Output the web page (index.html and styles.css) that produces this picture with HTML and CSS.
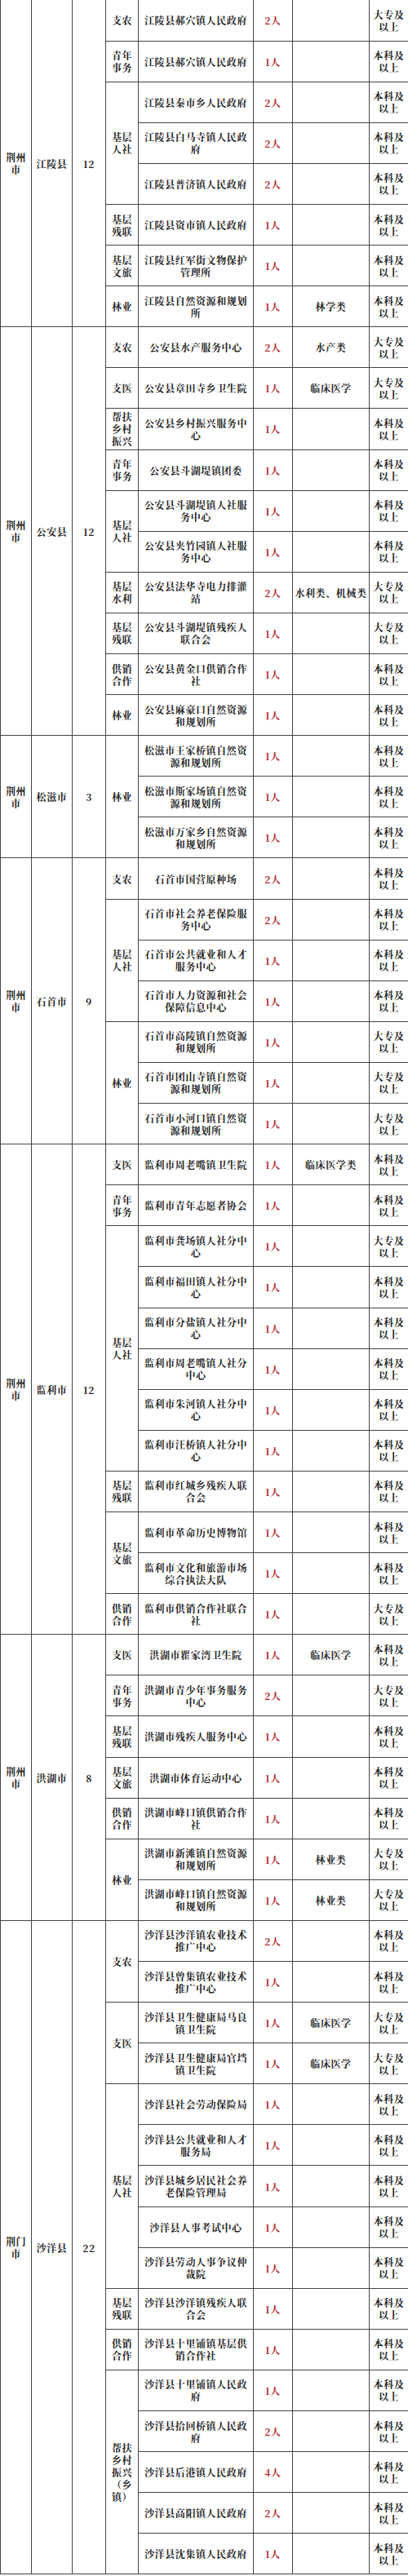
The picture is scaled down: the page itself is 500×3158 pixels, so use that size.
FILE: index.html
```html
<!DOCTYPE html>
<html lang="zh-CN">
<head>
<meta charset="utf-8">
<title>岗位表</title>
<link rel="stylesheet" href="styles.css">
</head>
<body>
<table class="sheet">
<colgroup>
<col class="c-city"><col class="c-county"><col class="c-total"><col class="c-cat"><col class="c-org"><col class="c-num"><col class="c-major"><col class="c-edu">
</colgroup>
<tbody>
<!-- 江陵县 -->
<tr><td rowspan="8">荆州市</td><td rowspan="8">江陵县</td><td rowspan="8">12</td><td>支农</td><td>江陵县郝穴镇人民政府</td><td class="num">2人</td><td></td><td>大专及以上</td></tr>
<tr><td>青年事务</td><td>江陵县郝穴镇人民政府</td><td class="num">1人</td><td></td><td>本科及以上</td></tr>
<tr><td rowspan="3">基层人社</td><td>江陵县秦市乡人民政府</td><td class="num">2人</td><td></td><td>本科及以上</td></tr>
<tr><td>江陵县白马寺镇人民政府</td><td class="num">2人</td><td></td><td>本科及以上</td></tr>
<tr><td>江陵县普济镇人民政府</td><td class="num">2人</td><td></td><td>本科及以上</td></tr>
<tr><td>基层残联</td><td>江陵县资市镇人民政府</td><td class="num">1人</td><td></td><td>本科及以上</td></tr>
<tr><td>基层文旅</td><td>江陵县红军街文物保护管理所</td><td class="num">1人</td><td></td><td>本科及以上</td></tr>
<tr><td>林业</td><td>江陵县自然资源和规划所</td><td class="num">1人</td><td>林学类</td><td>本科及以上</td></tr>
<!-- 公安县 -->
<tr><td rowspan="10">荆州市</td><td rowspan="10">公安县</td><td rowspan="10">12</td><td>支农</td><td>公安县水产服务中心</td><td class="num">2人</td><td>水产类</td><td>大专及以上</td></tr>
<tr><td>支医</td><td>公安县章田寺乡卫生院</td><td class="num">1人</td><td>临床医学</td><td>大专及以上</td></tr>
<tr><td>帮扶乡村振兴</td><td>公安县乡村振兴服务中心</td><td class="num">1人</td><td></td><td>本科及以上</td></tr>
<tr><td>青年事务</td><td>公安县斗湖堤镇团委</td><td class="num">1人</td><td></td><td>本科及以上</td></tr>
<tr><td rowspan="2">基层人社</td><td>公安县斗湖堤镇人社服务中心</td><td class="num">1人</td><td></td><td>本科及以上</td></tr>
<tr><td>公安县夹竹园镇人社服务中心</td><td class="num">1人</td><td></td><td>本科及以上</td></tr>
<tr><td>基层水利</td><td>公安县法华寺电力排灌站</td><td class="num">2人</td><td>水利类、机械类</td><td>大专及以上</td></tr>
<tr><td>基层残联</td><td>公安县斗湖堤镇残疾人联合会</td><td class="num">1人</td><td></td><td>大专及以上</td></tr>
<tr><td>供销合作</td><td>公安县黄金口供销合作社</td><td class="num">1人</td><td></td><td>本科及以上</td></tr>
<tr><td>林业</td><td>公安县麻豪口自然资源和规划所</td><td class="num">1人</td><td></td><td>本科及以上</td></tr>
<!-- 松滋市 -->
<tr><td rowspan="3">荆州市</td><td rowspan="3">松滋市</td><td rowspan="3">3</td><td rowspan="3">林业</td><td>松滋市王家桥镇自然资源和规划所</td><td class="num">1人</td><td></td><td>本科及以上</td></tr>
<tr><td>松滋市斯家场镇自然资源和规划所</td><td class="num">1人</td><td></td><td>本科及以上</td></tr>
<tr><td>松滋市万家乡自然资源和规划所</td><td class="num">1人</td><td></td><td>本科及以上</td></tr>
<!-- 石首市 -->
<tr><td rowspan="7">荆州市</td><td rowspan="7">石首市</td><td rowspan="7">9</td><td>支农</td><td>石首市国营原种场</td><td class="num">2人</td><td></td><td>本科及以上</td></tr>
<tr><td rowspan="3">基层人社</td><td>石首市社会养老保险服务中心</td><td class="num">2人</td><td></td><td>本科及以上</td></tr>
<tr><td>石首市公共就业和人才服务中心</td><td class="num">1人</td><td></td><td>本科及以上</td></tr>
<tr><td>石首市人力资源和社会保障信息中心</td><td class="num">1人</td><td></td><td>本科及以上</td></tr>
<tr><td rowspan="3">林业</td><td>石首市高陵镇自然资源和规划所</td><td class="num">1人</td><td></td><td>大专及以上</td></tr>
<tr><td>石首市团山寺镇自然资源和规划所</td><td class="num">1人</td><td></td><td>大专及以上</td></tr>
<tr><td>石首市小河口镇自然资源和规划所</td><td class="num">1人</td><td></td><td>大专及以上</td></tr>
<!-- 监利市 -->
<tr><td rowspan="12">荆州市</td><td rowspan="12">监利市</td><td rowspan="12">12</td><td>支医</td><td>监利市周老嘴镇卫生院</td><td class="num">1人</td><td>临床医学类</td><td>本科及以上</td></tr>
<tr><td>青年事务</td><td>监利市青年志愿者协会</td><td class="num">1人</td><td></td><td>本科及以上</td></tr>
<tr><td rowspan="6">基层人社</td><td>监利市龚场镇人社分中心</td><td class="num">1人</td><td></td><td>大专及以上</td></tr>
<tr><td>监利市福田镇人社分中心</td><td class="num">1人</td><td></td><td>本科及以上</td></tr>
<tr><td>监利市分盐镇人社分中心</td><td class="num">1人</td><td></td><td>本科及以上</td></tr>
<tr><td>监利市周老嘴镇人社分中心</td><td class="num">1人</td><td></td><td>本科及以上</td></tr>
<tr><td>监利市朱河镇人社分中心</td><td class="num">1人</td><td></td><td>本科及以上</td></tr>
<tr><td>监利市汪桥镇人社分中心</td><td class="num">1人</td><td></td><td>本科及以上</td></tr>
<tr><td>基层残联</td><td>监利市红城乡残疾人联合会</td><td class="num">1人</td><td></td><td>本科及以上</td></tr>
<tr><td rowspan="2">基层文旅</td><td>监利市革命历史博物馆</td><td class="num">1人</td><td></td><td>本科及以上</td></tr>
<tr><td>监利市文化和旅游市场综合执法大队</td><td class="num">1人</td><td></td><td>本科及以上</td></tr>
<tr><td>供销合作</td><td>监利市供销合作社联合社</td><td class="num">1人</td><td></td><td>大专及以上</td></tr>
<!-- 洪湖市 -->
<tr><td rowspan="7">荆州市</td><td rowspan="7">洪湖市</td><td rowspan="7">8</td><td>支医</td><td>洪湖市瞿家湾卫生院</td><td class="num">1人</td><td>临床医学</td><td>本科及以上</td></tr>
<tr><td>青年事务</td><td>洪湖市青少年事务服务中心</td><td class="num">2人</td><td></td><td>大专及以上</td></tr>
<tr><td>基层残联</td><td>洪湖市残疾人服务中心</td><td class="num">1人</td><td></td><td>本科及以上</td></tr>
<tr><td>基层文旅</td><td>洪湖市体育运动中心</td><td class="num">1人</td><td></td><td>本科及以上</td></tr>
<tr><td>供销合作</td><td>洪湖市峰口镇供销合作社</td><td class="num">1人</td><td></td><td>本科及以上</td></tr>
<tr><td rowspan="2">林业</td><td>洪湖市新滩镇自然资源和规划所</td><td class="num">1人</td><td>林业类</td><td>大专及以上</td></tr>
<tr><td>洪湖市峰口镇自然资源和规划所</td><td class="num">1人</td><td>林业类</td><td>大专及以上</td></tr>
<!-- 沙洋县 -->
<tr><td rowspan="16">荆门市</td><td rowspan="16">沙洋县</td><td rowspan="16">22</td><td rowspan="2">支农</td><td>沙洋县沙洋镇农业技术推广中心</td><td class="num">2人</td><td></td><td>本科及以上</td></tr>
<tr><td>沙洋县曾集镇农业技术推广中心</td><td class="num">1人</td><td></td><td>本科及以上</td></tr>
<tr><td rowspan="2">支医</td><td>沙洋县卫生健康局马良镇卫生院</td><td class="num">1人</td><td>临床医学</td><td>大专及以上</td></tr>
<tr><td>沙洋县卫生健康局官垱镇卫生院</td><td class="num">1人</td><td>临床医学</td><td>大专及以上</td></tr>
<tr><td rowspan="5">基层人社</td><td>沙洋县社会劳动保险局</td><td class="num">1人</td><td></td><td>本科及以上</td></tr>
<tr><td>沙洋县公共就业和人才服务局</td><td class="num">1人</td><td></td><td>本科及以上</td></tr>
<tr><td>沙洋县城乡居民社会养老保险管理局</td><td class="num">1人</td><td></td><td>本科及以上</td></tr>
<tr><td>沙洋县人事考试中心</td><td class="num">1人</td><td></td><td>本科及以上</td></tr>
<tr><td>沙洋县劳动人事争议仲裁院</td><td class="num">1人</td><td></td><td>本科及以上</td></tr>
<tr><td>基层残联</td><td>沙洋县沙洋镇残疾人联合会</td><td class="num">1人</td><td></td><td>本科及以上</td></tr>
<tr><td>供销合作</td><td>沙洋县十里铺镇基层供销合作社</td><td class="num">1人</td><td></td><td>本科及以上</td></tr>
<tr><td rowspan="5">帮扶乡村振兴（乡镇）</td><td>沙洋县十里铺镇人民政府</td><td class="num">1人</td><td></td><td>本科及以上</td></tr>
<tr><td>沙洋县拾回桥镇人民政府</td><td class="num">2人</td><td></td><td>本科及以上</td></tr>
<tr><td>沙洋县后港镇人民政府</td><td class="num">4人</td><td></td><td>本科及以上</td></tr>
<tr><td>沙洋县高阳镇人民政府</td><td class="num">2人</td><td></td><td>本科及以上</td></tr>
<tr><td>沙洋县沈集镇人民政府</td><td class="num">1人</td><td></td><td>本科及以上</td></tr>
</tbody>
</table>
</body>
</html>
```
FILE: styles.css
```css
html, body {
  margin: 0;
  padding: 0;
  background: #ffffff;
}

.sheet {
  width: 500px;
  table-layout: fixed;
  border-collapse: collapse;
  font-family: "Noto Serif CJK SC", "Noto Sans CJK SC", "Liberation Serif", serif;
  font-size: 12px;
  font-weight: 700;
  letter-spacing: 0.6px;
  line-height: 15px;
  color: #222222;
}

.c-city { width: 38px; }
.c-county { width: 50px; }
.c-total { width: 41px; }
.c-cat { width: 40px; }
.c-org { width: 141px; }
.c-num { width: 48px; }
.c-major { width: 94px; }
.c-edu { width: 48px; }

.sheet tr {
  height: 50.1px;
}

.sheet td {
  border: 1px solid #444444;
  padding: 0 2px;
  text-align: center;
  vertical-align: middle;
  word-break: break-all;
}

.sheet tr:first-child td {
  border-top: none;
}

.sheet td.num {
  color: #b0262c;
}
```
